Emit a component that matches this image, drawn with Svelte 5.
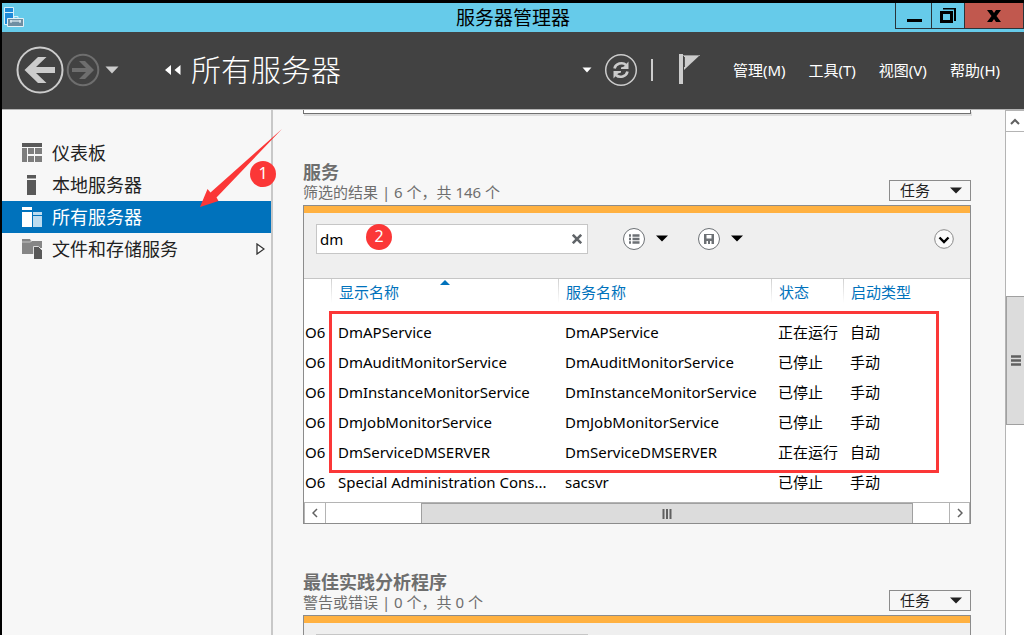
<script>
  let filter = 'dm';
  let active = 'all';

  const nav = [
    { id: 'dashboard', label: '仪表板' },
    { id: 'local', label: '本地服务器' },
    { id: 'all', label: '所有服务器' },
    { id: 'storage', label: '文件和存储服务', expandable: true },
  ];

  const menus = ['管理(M)', '工具(T)', '视图(V)', '帮助(H)'];

  const services = [
    { display: 'DmAPService', name: 'DmAPService', status: '正在运行', start: '自动' },
    { display: 'DmAuditMonitorService', name: 'DmAuditMonitorService', status: '已停止', start: '手动' },
    { display: 'DmInstanceMonitorService', name: 'DmInstanceMonitorService', status: '已停止', start: '手动' },
    { display: 'DmJobMonitorService', name: 'DmJobMonitorService', status: '已停止', start: '手动' },
    { display: 'DmServiceDMSERVER', name: 'DmServiceDMSERVER', status: '正在运行', start: '自动' },
    { display: 'Special Administration Cons...', name: 'sacsvr', status: '已停止', start: '手动' },
  ];
</script>

<div class="window">
  <div class="titlebar">
    <svg class="app-icon" width="20" height="20" viewBox="0 0 20 20">
      <path d="M.5 .5h9v17h-9z" fill="#1e8ad8" stroke="#d8f0fa" />
      <path d="M1 5.500h8" stroke="#d8f0fa" />
      <path d="M10 11V9.500h4V11" fill="none" stroke="#d8f0fa" />
      <path d="M3.500 11.500h16v8h-16z" fill="#6f8fa3" stroke="#e4f1f6" />
      <path d="M6 14h11" stroke="#c8dbe5" stroke-width="1.500" />
      <path d="M7 13v3M16 13v3" stroke="#eef6fa" />
    </svg>
    <h1>服务器管理器</h1>
    <div class="window-controls">
      <button class="min" aria-label="最小化">
        <svg width="16" height="16" viewBox="0 0 16 16"><path d="M1 11h15v3H1z" /></svg>
      </button>
      <button class="max" aria-label="还原">
        <svg width="16" height="16" viewBox="0 0 16 16">
          <path d="M1.500 4.500h10v9h-10z" fill="none" stroke="#000" stroke-width="3" />
          <path d="M3 0h13v13h-2V1.500H3z" />
        </svg>
      </button>
      <button class="close" aria-label="关闭">
        <svg width="14" height="14" viewBox="0 0 14 14"><path d="M0 1h5L7 4 9 1h5L9.500 7l4.500 6H9L7 10l-2 3H0l4.500-6z" /></svg>
      </button>
    </div>
  </div>

  <header class="header">
    <button class="back" aria-label="后退">
      <svg width="48" height="48" viewBox="0 0 48 48">
        <circle cx="24" cy="24" r="22.500" fill="none" stroke="#ccc" stroke-width="2" />
        <path d="M8.500 24L22 11h8.500L20 21h19v6H20l10.500 10H22z" fill="#ccc" />
      </svg>
    </button>
    <button class="forward" aria-label="前进">
      <svg width="34" height="34" viewBox="0 0 34 34">
        <circle cx="17" cy="17" r="15.300" fill="none" stroke="#6e6e6e" stroke-width="2" />
        <path d="M28 17L19 8h-6l7 7H6v4h14l-7 7h6z" fill="#6e6e6e" />
      </svg>
    </button>
    <button class="history" aria-label="历史记录">
      <svg width="14" height="8" viewBox="0 0 14 8"><path d="M.5 .5h13L7 7.500z" fill="#ccc" /></svg>
    </button>
    <svg class="crumb" width="16" height="10" viewBox="0 0 16 10">
      <path d="M6 0v10L0 5zM15.500 0v10L9.500 5z" fill="#fff" />
    </svg>
    <h2>所有服务器</h2>
    <div class="commands">
      <button aria-label="刷新选项">
        <svg width="10" height="6" viewBox="0 0 10 6"><path d="M.5 .5h9L5 5.500z" fill="#fff" /></svg>
      </button>
      <button class="refresh" aria-label="刷新">
        <svg width="34" height="34" viewBox="0 0 34 34">
          <circle cx="17" cy="17" r="15.300" fill="none" stroke="#ccc" stroke-width="1.500" />
          <path d="M10.500 15.500c1-5 8-7 11.500-3.500M23.500 18.500c-1 5-8 7-11.500 3.500" fill="none" stroke="#ccc" stroke-width="2.600" />
          <path d="M24.500 8.500v7.500h-7.500v-1.500l3-1zM9.500 25.500V18H17v1.500l-3 1z" fill="#ccc" />
        </svg>
      </button>
      <span class="divider"></span>
      <button class="flag" aria-label="通知">
        <svg width="23" height="32" viewBox="0 0 23 32">
          <path d="M1 0h4v30H1z" fill="#ccc" />
          <path d="M6 1h16L6 16z" fill="#ccc" />
          <path d="M6.500 3v10" stroke="#555" />
          <path d="M5 1.500h17" stroke="#999" />
        </svg>
      </button>
      <nav class="menus">
        {#each menus as menu}
          <button>{menu}</button>
        {/each}
      </nav>
    </div>
  </header>

  <div class="body">
    <nav class="sidebar">
      {#each nav as item}
        <a href="#{item.id}" class:active={active === item.id} on:click|preventDefault={() => (active = item.id)}>
          <svg width="20" height="20" viewBox="0 0 20 20">
            {#if item.id === 'dashboard'}
              <path d="M0 0h20v4H0z" fill="#595959" />
              <path d="M0 5h5v14H0zM6 5h6v6H6zM13 5h7v6h-7zM6 13h6v6H6zM13 13h7v6h-7z" fill="#7d7d7d" />
            {:else if item.id === 'local'}
              <path d="M5 0h9v3H5zM5 5h9v15H5z" fill="#595959" />
              <path d="M5 3.500h9" stroke="#aaa" />
            {:else if item.id === 'all'}
              <path d="M0 0h10v3H0zM0 5h10v15H0z" fill="#fff" />
              <path d="M11 5h9v3h-9zM11 9h9v11h-9z" fill="#bcdcf0" />
            {:else}
              <path d="M0 0h8l1 2h11v7h-9v6H0z" fill="#868686" />
              <path d="M0 3h8l2-1" fill="none" stroke="#c4c4c4" />
              <path d="M12 8h5l3 3v9h-8z" fill="#595959" />
              <path d="M11.500 15V7.500h5l3.500 3.500" fill="none" stroke="#ddd" />
            {/if}
          </svg>
          <span>{item.label}</span>
          {#if item.expandable}
            <svg class="expand" width="9" height="12" viewBox="0 0 9 12">
              <path d="M1 1l7 5-7 5z" fill="#fff" stroke="#333" stroke-width="1.300" />
            </svg>
          {/if}
        </a>
      {/each}
    </nav>

    <main class="content">
      <div class="previous-panel"></div>

      <section>
        <div class="section-head">
          <div>
            <h3>服务</h3>
            <p>筛选的结果 | 6 个，共 146 个</p>
          </div>
          <button class="tasks">
            任务
            <svg width="12" height="7" viewBox="0 0 12 7"><path d="M0 .5h12L6 6.500z" fill="#222" /></svg>
          </button>
        </div>

        <div class="panel">
          <div class="accent"></div>
          <div class="toolbar">
            <div class="search">
              <input type="text" aria-label="筛选器" bind:value={filter} />
              <button class="clear" aria-label="清除" on:click={() => (filter = '')}>
                <svg width="10" height="10" viewBox="0 0 10 10"><path d="M.8 .8l8.400 8.400M9.200 .8L.8 9.200" stroke="#606468" stroke-width="2.600" /></svg>
              </button>
              <span class="badge step-two">2</span>
            </div>
            <button class="round" aria-label="条件列表">
              <svg width="24" height="24" viewBox="0 0 24 24">
                <circle cx="12" cy="12" r="10.500" fill="#fff" stroke="#6d7175" />
                <path d="M7 8.500h2M7 12h2M7 15.500h2M10.500 8.500h7M10.500 12h7M10.500 15.500h7" stroke="#6d7175" stroke-width="2.400" />
              </svg>
              <svg width="12" height="7" viewBox="0 0 12 7"><path d="M0 .5h12L6 6.500z" /></svg>
            </button>
            <button class="round save" aria-label="保存查询">
              <svg width="24" height="24" viewBox="0 0 24 24">
                <circle cx="12" cy="12" r="10.500" fill="#fff" stroke="#6d7175" />
                <path d="M7 7h10v10H7z" fill="#6d7175" />
                <path d="M9.500 8h5v3.500h-5zM9.500 14h1.500v3H9.500zM13 14h1.500v3H13z" fill="#fff" />
              </svg>
              <svg width="12" height="7" viewBox="0 0 12 7"><path d="M0 .5h12L6 6.500z" /></svg>
            </button>
            <button class="collapse" aria-label="展开">
              <svg width="20" height="20" viewBox="0 0 20 20">
                <circle cx="10" cy="10" r="9.300" fill="#fafafa" stroke="#8a8a8a" />
                <path d="M5.500 8.500l4.500 4.500 4.500-4.500" fill="none" stroke="#000" stroke-width="2.400" />
              </svg>
            </button>
          </div>

          <div class="grid">
            <table>
              <colgroup>
                <col class="col-server" />
                <col class="col-display" />
                <col class="col-name" />
                <col class="col-status" />
                <col />
              </colgroup>
              <thead>
                <tr>
                  <th></th>
                  <th>
                    显示名称
                    <svg class="sort" width="10" height="5" viewBox="0 0 10 5"><path d="M0 5l5-5 5 5z" fill="#0072bc" /></svg>
                  </th>
                  <th>服务名称</th>
                  <th>状态</th>
                  <th>启动类型</th>
                </tr>
              </thead>
              <tbody>
                {#each services as service}
                  <tr>
                    <td class="server">O6</td>
                    <td>{service.display}</td>
                    <td>{service.name}</td>
                    <td>{service.status}</td>
                    <td>{service.start}</td>
                  </tr>
                {/each}
              </tbody>
            </table>
            <div class="highlight"></div>
          </div>

          <div class="hscroll">
            <button aria-label="向左滚动">
              <svg width="6" height="10" viewBox="0 0 6 10"><path d="M5 1L1 5l4 4" fill="none" stroke="#606060" stroke-width="1.500" /></svg>
            </button>
            <div class="htrack">
              <div class="hthumb">
                <svg width="10" height="10" viewBox="0 0 10 10"><path d="M1.500 0v10M5 0v10M8.500 0v10" stroke="#606060" stroke-width="2" /></svg>
              </div>
            </div>
            <button class="right" aria-label="向右滚动">
              <svg width="6" height="10" viewBox="0 0 6 10"><path d="M1 1l4 4-4 4" fill="none" stroke="#606060" stroke-width="1.500" /></svg>
            </button>
          </div>
        </div>
      </section>

      <section>
        <div class="section-head">
          <div>
            <h3>最佳实践分析程序</h3>
            <p>警告或错误 | 0 个，共 0 个</p>
          </div>
          <button class="tasks">
            任务
            <svg width="12" height="7" viewBox="0 0 12 7"><path d="M0 .5h12L6 6.500z" fill="#222" /></svg>
          </button>
        </div>
        <div class="panel">
          <div class="accent"></div>
          <div class="toolbar">
            <div class="search">
              <input type="text" aria-label="筛选器" />
            </div>
          </div>
        </div>
      </section>
    </main>

    <div class="vscroll">
      <button aria-label="向上滚动">
        <svg width="10" height="7" viewBox="0 0 10 7"><path d="M1 6l4-4 4 4" fill="none" stroke="#606060" stroke-width="2" /></svg>
      </button>
      <div class="vtrack">
        <div class="vthumb">
          <svg width="10" height="11" viewBox="0 0 10 11"><path d="M0 1.500h10M0 5.500h10M0 9.500h10" stroke="#606060" stroke-width="2.400" /></svg>
        </div>
      </div>
    </div>

    <svg class="arrow" width="84" height="80" viewBox="0 0 84 80">
      <path d="M82 1L10.500 64.500L7.500 61L0 79L18.500 73L16.500 69.500z" fill="#fb3737" />
    </svg>
    <span class="badge step-one">1</span>
  </div>
</div>

<style>
  :global(body) {
    overflow: hidden;
    background: #000;
  }

  .window {
    box-sizing: border-box;
    display: flex;
    flex-direction: column;
    height: 100vh;
    padding: 3px 0 0 2px;
    font-family: 'Noto Sans', 'Noto Sans CJK SC', sans-serif;
    font-size: 15px;
    line-height: 20px;
    color: #000;
  }

  button {
    margin: 0;
    padding: 0;
    border: none;
    background: none;
    font: inherit;
    color: inherit;
  }

  svg {
    display: block;
    flex: none;
  }

  h1,
  h2,
  h3,
  p {
    margin: 0;
  }

  /* title bar */
  .titlebar {
    display: grid;
    grid-template-columns: 1fr auto 1fr;
    flex: none;
    height: 29px;
    background: #66cbea;
  }

  .app-icon {
    margin: 4px 0 0 2px;
  }

  h1 {
    font-size: 19px;
    font-weight: 400;
    line-height: 30px;
  }

  .window-controls {
    display: flex;
    justify-self: end;
    height: 26px;
    border: solid #29343a;
    border-width: 0 0 1px 1px;
    box-sizing: border-box;
  }

  .window-controls button {
    display: flex;
    align-items: center;
    justify-content: center;
    border-right: 1px solid #29343a;
  }

  .min {
    width: 36px;
  }

  .max {
    width: 33px;
  }

  .window-controls .close {
    width: 59px;
    background: #c1584e;
  }

  /* header */
  .header {
    display: flex;
    align-items: center;
    flex: none;
    box-sizing: border-box;
    height: 78px;
    padding: 0 24px 1px 14px;
    background: #424242;
    border-bottom: 1px solid #b4b4b4;
    color: #fff;
  }

  .forward {
    margin-left: 2px;
  }

  .history {
    margin-left: 5px;
  }

  .crumb {
    margin-left: 46px;
  }

  h2 {
    margin-left: 10px;
    font-size: 30px;
    font-weight: 300;
    line-height: 40px;
  }

  .commands {
    display: flex;
    align-items: center;
    margin-left: auto;
  }

  .refresh {
    margin-left: 12px;
  }

  .divider {
    width: 2px;
    height: 22px;
    margin-left: 13px;
    background: #ccc;
  }

  .flag {
    margin: 0 32px 0 25px;
  }

  .menus {
    display: flex;
    gap: 23px;
    padding-bottom: 1px;
  }

  /* body */
  .body {
    position: relative;
    display: flex;
    flex: 1;
    min-height: 0;
    background: #f7f7f7;
  }

  .sidebar {
    flex: none;
    width: 269px;
    padding-top: 27px;
    border-right: 2px solid #c8c8c8;
  }

  .sidebar a {
    display: flex;
    align-items: center;
    gap: 10px;
    height: 32px;
    padding: 0 6px 0 20px;
    font-size: 18px;
    line-height: 32px;
    color: #222;
    text-decoration: none;
  }

  .sidebar a.active {
    background: #0072bc;
    color: #fff;
  }

  .expand {
    margin-left: auto;
  }

  .content {
    flex: 1;
    min-width: 0;
    overflow: hidden;
    padding: 0 34px 0 30px;
  }

  .previous-panel {
    height: 3px;
    border: 1px solid #707070;
    border-top: none;
    background: #fff;
    box-shadow: 1px 2px 0 #dcdcdc;
  }

  section {
    padding-top: 46px;
  }

  .section-head {
    display: flex;
    align-items: flex-end;
    justify-content: space-between;
    height: 42px;
    padding-bottom: 3px;
    color: #6e6e6e;
  }

  h3 {
    font-size: 18px;
    font-weight: 700;
    line-height: 20px;
  }

  .tasks {
    display: flex;
    align-items: center;
    justify-content: space-between;
    width: 82px;
    height: 21px;
    margin-bottom: 1px;
    padding: 0 8px 0 10px;
    border: 1px solid #8c8c8c;
    line-height: 19px;
    color: #222;
  }

  .panel {
    border: 1px solid #8c8c8c;
  }

  .accent {
    height: 7px;
    background: #ffb141;
  }

  .toolbar {
    display: flex;
    align-items: center;
    height: 51px;
    padding: 0 16px 14px 12px;
    background: #efefef;
    border-bottom: 1px solid #c6c6c6;
  }

  .search {
    position: relative;
    display: flex;
    width: 270px;
    height: 28px;
    border: 1px solid #c6c6c6;
    background: #fff;
  }

  .search input {
    flex: 1;
    min-width: 0;
    padding: 0 3px;
    border: none;
    outline: none;
    background: none;
    font: inherit;
    color: #000;
  }

  .clear {
    padding: 0 5px;
  }

  .round {
    display: flex;
    align-items: center;
    gap: 10px;
    margin-left: 34px;
  }

  .save {
    margin-left: 29px;
  }

  .collapse {
    margin-left: auto;
  }

  /* services table */
  .grid {
    position: relative;
    padding-bottom: 5px;
    background: #fff;
  }

  table {
    width: 100%;
    table-layout: fixed;
    border-collapse: collapse;
  }

  .col-server {
    width: 27px;
  }

  .col-display {
    width: 227px;
  }

  .col-name {
    width: 213px;
  }

  .col-status {
    width: 72px;
  }

  th {
    position: relative;
    height: 35px;
    padding: 3px 0 0 8px;
    font-weight: 400;
    text-align: left;
    vertical-align: top;
    color: #0072bc;
  }

  th + th {
    background: linear-gradient(#d0d0d0, #fff) no-repeat 0 0 / 1px 24px;
  }

  .sort {
    position: absolute;
    top: 1px;
    left: 48%;
  }

  td {
    height: 30px;
    padding: 0 0 0 7px;
    white-space: nowrap;
    overflow: hidden;
  }

  td.server {
    padding-left: 1px;
  }

  .highlight {
    position: absolute;
    inset: 32px 31px 29px 25px;
    border: 3px solid #fb3737;
  }

  /* scroll bars */
  .hscroll {
    display: flex;
    height: 20px;
    border-top: 1px solid #b4b4b4;
    background: #fff;
  }

  .hscroll button {
    display: flex;
    align-items: center;
    justify-content: center;
    width: 22px;
    border: solid #b4b4b4;
    border-width: 0 1px;
  }

  .hscroll .right {
    width: 21px;
  }

  .htrack {
    flex: 1;
  }

  .hthumb {
    display: flex;
    align-items: center;
    justify-content: center;
    box-sizing: border-box;
    width: 79%;
    height: 20px;
    margin-left: 15.3%;
    border: 1px solid #a0a0a0;
    border-bottom: none;
    background: #dcdcdc;
  }

  .vscroll {
    display: flex;
    flex-direction: column;
    flex: none;
    width: 18px;
    border-left: 1px solid #b4b4b4;
    background: #fff;
  }

  .vscroll button {
    display: flex;
    align-items: center;
    justify-content: center;
    height: 22px;
    border: solid #b4b4b4;
    border-width: 1px 0;
  }

  .vtrack {
    flex: 1;
  }

  .vthumb {
    display: flex;
    align-items: center;
    justify-content: center;
    box-sizing: border-box;
    height: 129px;
    margin-top: 164px;
    border: 1px solid #a0a0a0;
    border-right: none;
    background: #dcdcdc;
  }

  /* annotations */
  .badge {
    position: absolute;
    width: 26px;
    height: 26px;
    border-radius: 50%;
    background: #fb3737;
    font-size: 16px;
    line-height: 25px;
    text-align: center;
    color: #fff;
  }

  .step-one {
    top: 51px;
    left: 248px;
  }

  .step-two {
    top: -1px;
    left: 49px;
  }

  .arrow {
    position: absolute;
    top: 18px;
    left: 198px;
  }
</style>
